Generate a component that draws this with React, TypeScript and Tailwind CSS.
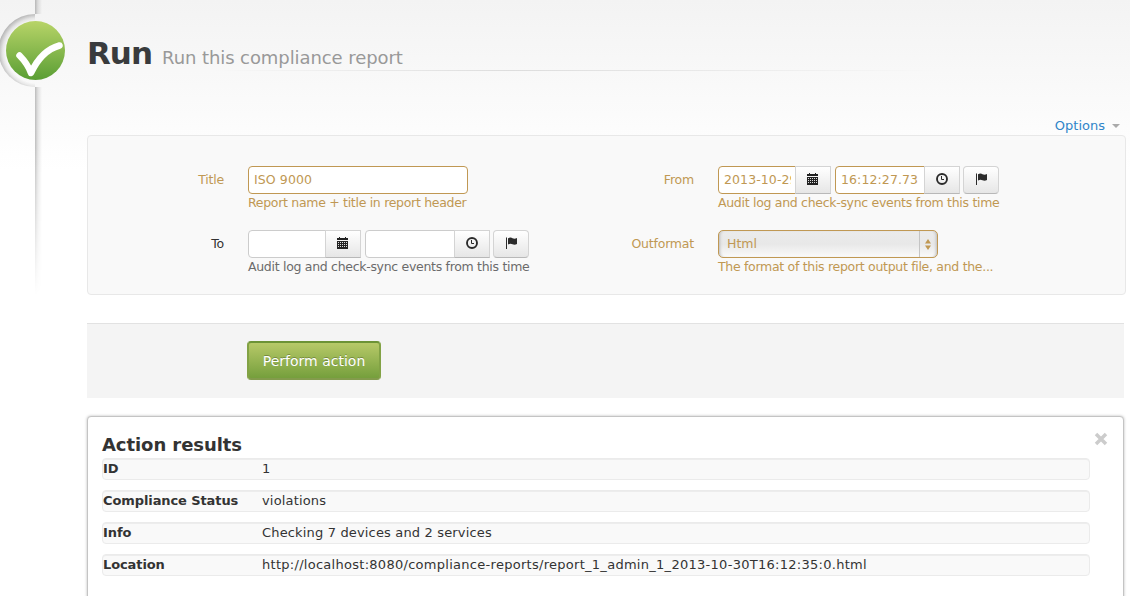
import type { ReactNode } from "react";

function CalendarIcon() {
  return (
    <svg width="11" height="12" viewBox="0 0 11 12" className="-mt-[2px] mr-px" shapeRendering="crispEdges" aria-hidden="true">
      <path fill="#222" d="M2 0h1v1h5V0h1v1h2v2H0V1h2zM0 4h11v8H0z" />
      <path
        fill="#ddd"
        d="M1 5h1v1H1zM3 5h1v1H3zM5 5h1v1H5zM7 5h1v1H7zM9 5h1v1H9zM1 7h1v1H1zM3 7h1v1H3zM5 7h1v1H5zM7 7h1v1H7zM9 7h1v1H9zM1 9h1v1H1zM3 9h1v1H3zM5 9h1v1H5zM7 9h1v1H7zM9 9h1v1H9z"
      />
    </svg>
  );
}

function ClockIcon() {
  return (
    <svg width="12" height="12" viewBox="0 0 12 12" className="-mt-[2px]" fill="none" stroke="#2b2b2b" aria-hidden="true">
      <circle cx="6" cy="6" r="5" strokeWidth="1.9" />
      <path d="M5.500 3v3.500H8" strokeWidth="1" />
    </svg>
  );
}

function FlagIcon() {
  return (
    <svg width="11" height="12" viewBox="0 0 11 12" className="-mt-[2px]" fill="#2b2b2b" aria-hidden="true">
      <path d="M0 0.500h1V12H0z" />
      <path d="M2 1.300C4 0.200 5.500 0.600 6.500 1.200C8 2 9.500 1.700 11 1v6c-1.500.8-3 1-4.500.3C5 6.500 4 6.500 2 7.500z" />
    </svg>
  );
}

function Badge() {
  return (
    <svg className="absolute left-0 top-0" width="80" height="300" viewBox="0 0 80 300" aria-hidden="true">
      <defs>
        <linearGradient id="edge" x1="0" x2="1" y1="0" y2="0">
          <stop offset="0" stopColor="#000" stopOpacity=".25" />
          <stop offset=".4" stopColor="#000" stopOpacity=".1" />
          <stop offset="1" stopColor="#000" stopOpacity="0" />
        </linearGradient>
        <linearGradient id="fade" x1="0" x2="0" y1="0" y2="1">
          <stop offset="0" stopColor="#fff" />
          <stop offset=".5" stopColor="#fff" />
          <stop offset="1" stopColor="#fff" stopOpacity="0" />
        </linearGradient>
        <linearGradient id="green" x1="0" x2="0" y1="0" y2="1">
          <stop offset="0" stopColor="#b8d468" />
          <stop offset="1" stopColor="#5a9e34" />
        </linearGradient>
        <radialGradient id="ring" gradientUnits="userSpaceOnUse" cx="37" cy="52" r="39">
          <stop offset=".8" stopColor="#000" stopOpacity="0" />
          <stop offset=".88" stopColor="#000" stopOpacity=".07" />
          <stop offset="1" stopColor="#000" stopOpacity=".27" />
        </radialGradient>
        <mask id="fadeMask">
          <rect width="80" height="295" fill="url(#fade)" />
        </mask>
        <filter id="soft" x="-20%" y="-20%" width="140%" height="140%">
          <feGaussianBlur stdDeviation=".6" />
        </filter>
      </defs>
      <rect x="35" y="0" width="7" height="14" fill="url(#edge)" />
      <rect x="35" y="87" width="7" height="208" fill="url(#edge)" mask="url(#fadeMask)" />
      <path d="M35 14A36.500 36.500 0 0 0 35 87z" fill="url(#ring)" />
      <circle cx="35.500" cy="50.500" r="29.500" fill="url(#green)" />
      <path
        d="M19.500 55.500C24 60 28 65 31 73C37 60 47 49 59.500 45.500"
        fill="none"
        stroke="#fff"
        strokeWidth="6.500"
        strokeLinecap="round"
        strokeLinejoin="round"
        filter="url(#soft)"
      />
    </svg>
  );
}

function IconButton({ label, rounded, children }: { label: string; rounded?: boolean; children: ReactNode }) {
  return (
    <button
      aria-label={label}
      className={
        "flex h-7 w-9 items-center justify-center border border-[#d4d4d4] border-b-[#b8b8b8] bg-linear-to-b from-white to-[#e6e6e6] " +
        (rounded ? "rounded-[4px] ml-[3px]" : "-ml-px")
      }
    >
      {children}
    </button>
  );
}

function ValueBox({ value, warn, wide }: { value: string; warn?: boolean; wide?: boolean }) {
  return (
    <div
      className={
        "flex h-7 items-center rounded-l-[4px] border bg-white pl-[5px] pr-1 " +
        (wide ? "w-[90px] " : "w-[78px] ") +
        (warn ? "border-[#c09853]" : "border-[#ccc]")
      }
    >
      <span className="block overflow-hidden whitespace-nowrap tracking-[0.100px]">{value}</span>
    </div>
  );
}

function DateTime({ date, time, warn }: { date: string; time: string; warn?: boolean }) {
  return (
    <div className="flex">
      <ValueBox value={date} warn={warn} />
      <IconButton label="Pick date">
        <CalendarIcon />
      </IconButton>
      <div className="ml-1 flex">
        <ValueBox value={time} warn={warn} wide />
        <IconButton label="Pick time">
          <ClockIcon />
        </IconButton>
      </div>
      <IconButton label="Set to now" rounded>
        <FlagIcon />
      </IconButton>
    </div>
  );
}

function Field({ label, help, warn, children }: { label: string; help: string; warn?: boolean; children: ReactNode }) {
  return (
    <div className={"flex h-16 w-[470px] gap-6 " + (warn ? "text-[#c09853]" : "text-[#333]")}>
      <label className="w-[136px] pt-[5px] text-right leading-[18px] tracking-[-0.200px]">{label}</label>
      <div>
        {children}
        <p className={"whitespace-nowrap leading-[18px] tracking-[-0.300px] " + (warn ? "" : "text-[#6b6b6b]")}>{help}</p>
      </div>
    </div>
  );
}

const results = [
  { name: "ID", value: "1", spacing: "tracking-[0.160px]" },
  { name: "Compliance Status", value: "violations", spacing: "tracking-[0.160px]" },
  { name: "Info", value: "Checking 7 devices and 2 services", spacing: "tracking-[0.160px]" },
  {
    name: "Location",
    value: "http://localhost:8080/compliance-reports/report_1_admin_1_2013-10-30T16:12:35:0.html",
    spacing: "tracking-[0.280px]",
  },
];

export default function App() {
  return (
    <div className="relative h-[596px] overflow-hidden bg-white bg-linear-to-b from-[#f3f3f3] to-white to-[170px] font-['DejaVu_Sans',Verdana,sans-serif] text-[12.500px] text-[#333]">
      <Badge />
      <div className="pl-[87px]">
        <header className="flex h-[71px] flex-col justify-end">
          <div className="flex h-[37px] items-baseline gap-[10px] whitespace-nowrap">
            <h1 className="text-[31px] font-bold leading-[40px] tracking-[-1px] text-[#393b3d]">Run</h1>
            <p className="text-[18px] tracking-[-0.080px] text-[#999]">Run this compliance report</p>
          </div>
          <div className="h-px w-[850px] bg-linear-to-r from-transparent from-15% via-[#ddd] to-transparent" />
        </header>
        <div className="flex h-16 items-end justify-end gap-[7px] pr-[10px]">
          <span className="text-[13px] leading-[18px] text-[#2f85c9]">Options</span>
          <svg width="8" height="4" className="mb-[7px]" aria-hidden="true">
            <path d="M0 0h8L4 4z" fill="#aaa" />
          </svg>
        </div>
        <section className="flex h-40 w-[1039px] flex-wrap content-start rounded-[4px] border border-[#e8e8e8] bg-[#f9f9f9] pt-[30px]">
          <Field label="Title" help="Report name + title in report header" warn>
            <div className="flex h-7 w-[220px] items-center rounded-[4px] border border-[#c09853] bg-white px-[5px] tracking-[0.100px]">
              ISO 9000
            </div>
          </Field>
          <Field label="From" help="Audit log and check-sync events from this time" warn>
            <DateTime date="2013-10-29" time="16:12:27.73" warn />
          </Field>
          <Field label="To" help="Audit log and check-sync events from this time">
            <DateTime date="" time="" />
          </Field>
          <Field label="Outformat" help="The format of this report output file, and the..." warn>
            <div className="flex h-7 w-[220px] items-center justify-between rounded-[5px] border border-[#c09853] bg-linear-to-b from-[#ebebeb] via-[#e8e8e8] to-[#fafafa] pl-2 shadow-[inset_3px_0_3px_-2px_#bbb,inset_-3px_0_3px_-2px_#bbb]">
              <span>Html</span>
              <span className="flex h-[26px] w-[18px] items-center justify-center border-l border-[#c4c4c4]">
                <svg width="6" height="11" className="mr-px" fill="#c09853" aria-hidden="true">
                  <path d="M0 4.500L3 0l3 4.500zM0 6.500h6L3 11z" />
                </svg>
              </span>
            </div>
          </Field>
        </section>
        <div className="mt-7 flex h-[75px] w-[1037px] border-t border-[#e2e2e2] bg-[#f4f4f4] pl-40 pt-[17px]">
          <button className="h-[39px] w-[134px] rounded-[4px] border-2 border-[#82a245] border-t-[#6c9336] border-b-[#839b4c] bg-linear-to-b from-[#b7c968] to-[#759f3c] pt-px text-[14px] text-white [text-shadow:0_-1px_0_rgba(0,0,0,0.25)]">
            Perform action
          </button>
        </div>
        <section className="mt-[18px] h-[200px] w-[1037px] rounded-[4px] border border-[#c4c4c4] bg-white pl-[14px] pt-[18px] shadow-[0_0_3px_#bbb]">
          <div className="flex h-[23px] justify-between pr-[15px]">
            <h2 className="text-[18px] font-bold leading-[20px] tracking-[-0.070px]">Action results</h2>
            <svg width="14" height="14" viewBox="0 0 14 14" className="-mt-[3px]" aria-label="Close">
              <path d="M2 2l10 10M12 2L2 12" stroke="#ccc" strokeWidth="3.500" />
            </svg>
          </div>
          <dl className="flex w-[988px] flex-col gap-[10px]">
            {results.map(({ name, value, spacing }) => (
              <div
                key={name}
                className="flex h-[22px] rounded-[4px] border border-[#ebebeb] bg-[#f9f9f9] text-[13px] shadow-[inset_0_1px_0_#ededed]"
              >
                <dt className="w-[159px] whitespace-nowrap font-bold leading-[19px] tracking-[-0.100px]">{name}</dt>
                <dd className={"whitespace-nowrap leading-[19px] " + spacing}>{value}</dd>
              </div>
            ))}
          </dl>
        </section>
      </div>
    </div>
  );
}
